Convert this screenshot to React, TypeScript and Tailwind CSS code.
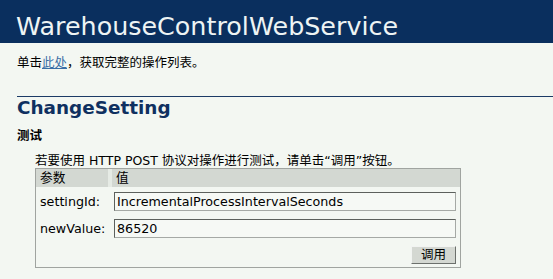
export default function App() {
  const font = "font-['DejaVu_Sans','Noto_Sans_CJK_SC',sans-serif]";

  return (
    <div className={`w-[553px] h-[279px] overflow-hidden bg-[#f3f7f2] text-black ${font}`}>
      {/* page title band */}
      <div className="h-[43px] pl-[16px] pt-[12px] text-[25.4px] leading-[29px] text-[#eef4f4] bg-[#0a2f5e] whitespace-nowrap">
        WarehouseControlWebService
      </div>

      <div className="pl-[17px]">
        <p className="mt-[12px] text-[12.5px] leading-[16px]">
          单击<a className="text-[#3a6ea5] underline">此处</a>，获取完整的操作列表。
        </p>

        <div className="mt-[25px] h-px bg-[#1b3b66]" />

        <h2 className="text-[18.4px] leading-[21px] font-bold text-[#0f3060]">ChangeSetting</h2>

        <h3 className="mt-[10px] text-[12.5px] leading-[15px] font-bold">测试</h3>

        <div className="ml-[18px]">
          <p className="mt-[11px] text-[12.5px] leading-[14px] whitespace-nowrap">
            若要使用 HTTP POST 协议对操作进行测试，请单击“调用”按钮。
          </p>

          {/* parameter form */}
          <div className="w-[426px] h-[100px] border border-[#a0a4a0] text-[12.7px]">
            <div className="flex h-[18px] leading-[18px]">
              <div className="w-[72px] pl-[4px] bg-[#d3d8d2]">参数</div>
              <div className="w-[4px] bg-[#e6ebe5]" />
              <div className="flex-1 pl-[4px] bg-[#d3d8d2]">值</div>
            </div>

            <div className="flex items-center mt-[5px] h-[19px]">
              <div className="w-[78px] pl-[4px]">settingId:</div>
              <input
                readOnly
                value="IncrementalProcessIntervalSeconds"
                className="w-[342px] h-[19px] pl-[2px] text-[12.7px] bg-[#f6f9f5] border border-t-[#5c605c] border-l-[#5c605c] border-r-[#a5a9a5] border-b-[#a5a9a5] outline-none"
              />
            </div>

            <div className="flex items-center mt-[8px] h-[19px]">
              <div className="w-[78px] pl-[4px]">newValue:</div>
              <input
                readOnly
                value="86520"
                className="w-[342px] h-[19px] pl-[2px] text-[12.7px] bg-[#f6f9f5] border border-t-[#5c605c] border-l-[#5c605c] border-r-[#a5a9a5] border-b-[#a5a9a5] outline-none"
              />
            </div>

            <div className="flex justify-end mt-[8px] pr-[4px]">
              <button className="w-[45px] h-[18px] leading-[16px] text-[12.5px] bg-[#d4d8d2] border border-t-[#f2f4f2] border-l-[#f2f4f2] border-r-[#6c706c] border-b-[#6c706c]">
                调用
              </button>
            </div>
          </div>
        </div>
      </div>
    </div>
  );
}
